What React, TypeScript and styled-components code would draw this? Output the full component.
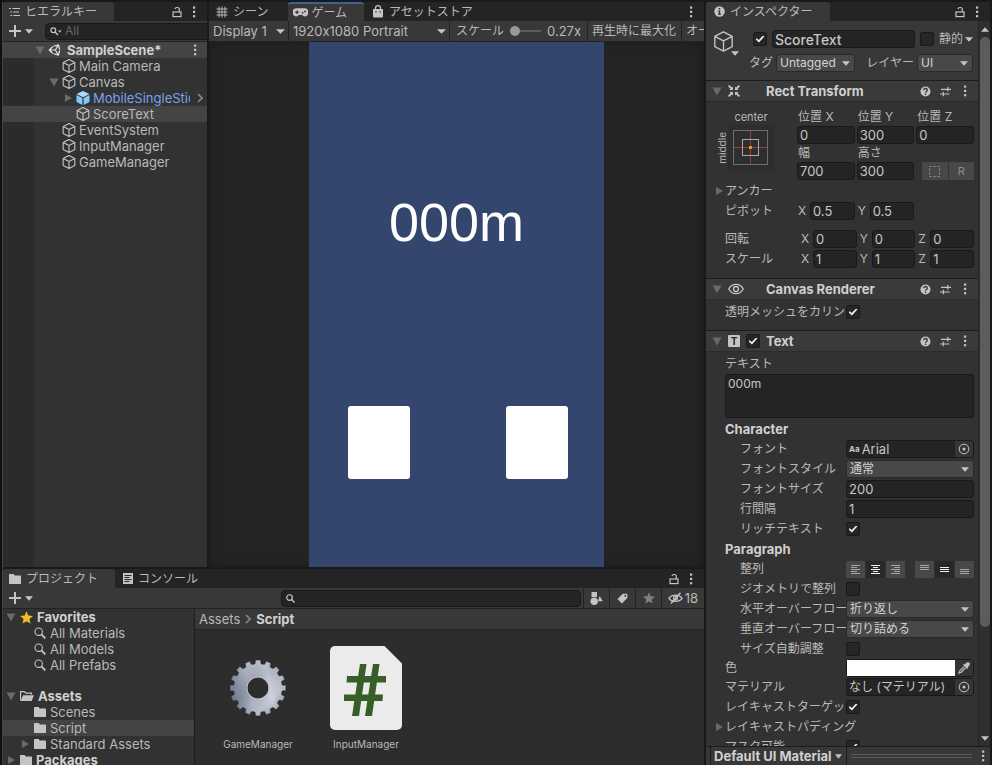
import React, { useState } from "react";
import styled, { createGlobalStyle, css } from "styled-components";
import { FaUnity } from "react-icons/fa";

const c = {
  edge: "#191919",
  tabbar: "#242424",
  bar: "#383838",
  panel: "#323232",
  field: "#242424",
  fieldLine: "#191919",
  button: "#484848",
  text: "#b9b9b9",
  bright: "#d0d0d0",
  dim: "#6a6a6a",
  icon: "#c4c4c4",
  select: "#444444",
};

const GlobalStyle = createGlobalStyle`
  *, *::before, *::after { box-sizing: border-box; }
  html, body, #root { height: 100%; margin: 0; }
  body {
    background: ${c.edge};
    color: ${c.text};
    font: 12px/16px Inter, "Noto Sans CJK JP", sans-serif;
    font-feature-settings: "calt" 0;
    overflow: hidden;
  }
  button, input, select, textarea {
    font: inherit;
    font-feature-settings: inherit;
    color: inherit;
    margin: 0;
  }
  button { background: none; border: 0; padding: 0; }
  ul { list-style: none; margin: 0; padding: 0; }
  svg { display: block; flex: none; }
`;

/* ---------- icons ---------- */

const Kebab = () => (
  <svg width="4" height="12" viewBox="0 0 4 12" fill={c.icon}>
    <rect x="1" y="0.5" width="2.2" height="2.2" />
    <rect x="1" y="4.8" width="2.2" height="2.2" />
    <rect x="1" y="9.1" width="2.2" height="2.2" />
  </svg>
);
const Lock = () => (
  <svg width="10" height="12" viewBox="0 0 10 12" fill="none" stroke={c.icon} strokeWidth="1.2">
    <rect x="1" y="6" width="8" height="4.6" />
    <path d="M7.3 6V3.4a1.9 1.9 0 0 0-1.9-1.9h-.6A1.9 1.9 0 0 0 3 3" />
  </svg>
);
const Down = ({ color = c.icon, size = 8 }: { color?: string; size?: number }) => (
  <svg width={size} height="5" viewBox="0 0 8 5" preserveAspectRatio="none" fill={color}>
    <path d="M0 .3h8L4 4.8z" />
  </svg>
);
const FoldOpen = () => (
  <svg width="10" height="9" viewBox="0 0 10 9" fill={c.dim}>
    <path d="M.5.5h9L5 8.5z" />
  </svg>
);
const FoldClosed = () => (
  <svg width="9" height="10" viewBox="0 0 9 10" fill={c.dim}>
    <path d="M1 1v8l7-4z" />
  </svg>
);
const Plus = () => (
  <svg width="12" height="12" viewBox="0 0 12 12" stroke={c.icon} strokeWidth="2">
    <path d="M6 0v12M0 6h12" />
  </svg>
);
const Cube = ({ size = 14 }: { size?: number }) => (
  <svg width={size} height={size} viewBox="0 0 14 14" fill="none" stroke={c.icon} strokeWidth={size > 16 ? 0.9 : 1.1} strokeLinejoin="round">
    <path d="M7 .6 12.8 3.6v6.8L7 13.4 1.2 10.4V3.6zM1.2 3.6 7 6.6l5.8-3M7 6.6v6.8" />
  </svg>
);
const Prefab = () => (
  <svg width="14" height="14" viewBox="0 0 14 14">
    <path d="M7 0 13.5 3 7 6.2.5 3z" fill="#a5dcff" />
    <path d="M.5 4 6.4 7v7L.5 11z" fill="#83c8f7" />
    <path d="M13.5 4 7.6 7v7l5.9-3z" fill="#83c8f7" />
  </svg>
);
const ListIcon = () => (
  <svg width="11" height="10" viewBox="0 0 11 10" fill={c.icon}>
    <path d="M0 1h2v1.1H0zM3.4 1H11v1.1H3.4zM1.4 4.4h1.8v1.1H1.4zM4.4 4.4H10v1.1H4.4zM1.4 7.9h1.8V9H1.4zM4.4 7.9H11V9H4.4z" />
  </svg>
);
const Grid3 = () => (
  <svg width="12" height="12" viewBox="0 0 12 12" stroke={c.icon} strokeWidth="1.3">
    <path d="M3 .5v11M6 .5v11M9 .5v11M.5 3h11M.5 6h11M.5 9h11" strokeWidth=".9" />
  </svg>
);
const Pad = () => (
  <svg width="15" height="9" viewBox="0 0 15 9">
    <path d="M4 .3h7a4.1 4.1 0 0 1 1.2 8.2c-1.5.4-2.3-1.5-3.4-1.5H6.2C5.1 7 4.3 8.9 2.8 8.5A4.1 4.1 0 0 1 4 .3z" fill={c.icon} />
    <path d="M2.2 4.2h3.6M4 2.4V6" stroke="#333" strokeWidth="1.2" />
    <circle cx="9.6" cy="4.8" r=".9" fill="#333" />
    <circle cx="12" cy="3.4" r=".9" fill="#333" />
  </svg>
);
const Bag = () => (
  <svg width="12" height="13" viewBox="0 0 12 13">
    <path d="M1 4h10v7.5a1 1 0 0 1-1 1H2a1 1 0 0 1-1-1z" fill={c.icon} />
    <path d="M3.5 4.5V3a2.5 2.3 0 0 1 5 0v1.5" fill="none" stroke={c.icon} strokeWidth="1.2" />
    <path d="M4 6v1.5M8 6v1.5" stroke="#333" strokeWidth="1" />
  </svg>
);
const Info = () => (
  <svg width="11" height="11" viewBox="0 0 11 11">
    <circle cx="5.5" cy="5.5" r="5.2" fill={c.icon} />
    <path d="M4.2 4.4h2v3.4h.9v1H4v-1h.8V5.4h-.6zM4.7 2h1.5v1.5H4.7z" fill="#2a2a2a" />
  </svg>
);
const Help = () => (
  <svg width="11" height="11" viewBox="0 0 11 11">
    <circle cx="5.5" cy="5.5" r="5" fill={c.icon} />
    <path d="M3.7 4.2c0-2.3 3.6-2.2 3.6 0 0 1.3-1.8 1.2-1.8 2.6" fill="none" stroke="#333" strokeWidth="1.3" />
    <rect x="4.8" y="7.6" width="1.4" height="1.3" fill="#333" />
  </svg>
);
const Sliders = () => (
  <svg width="11" height="11" viewBox="0 0 11 11" stroke={c.icon} strokeWidth="1.2">
    <path d="M1 3.3h10M7.8 1v4.6M0 8h9.5M3.3 5.7v4.6" />
  </svg>
);
const SearchIcon = ({ size = 9 }: { size?: number }) => (
  <svg width={size} height={size} viewBox="0 0 12 12" fill="none" stroke={c.icon} strokeWidth={size > 10 ? 1.1 : 1.6}>
    <circle cx="4.7" cy="4.7" r="3.7" />
    <path d="M7.4 7.4 11.4 11.4" strokeWidth="1.9" />
  </svg>
);
const SearchFilterIcon = () => (
  <svg width="12" height="9" viewBox="0 0 12 9" fill="none" stroke={c.icon}>
    <circle cx="3.3" cy="3.3" r="2.4" strokeWidth="1.2" />
    <path d="M5 5l3 3" strokeWidth="1.4" />
    <path d="M8 3.5h3.6L9.8 5.7z" fill={c.icon} stroke="none" />
  </svg>
);
const Chevron = () => (
  <svg width="6" height="10" viewBox="0 0 6 10" fill="none" stroke="#8a8a8a" strokeWidth="1.6">
    <path d="M1 1l4 4-4 4" />
  </svg>
);
const Folder = () => (
  <svg width="12" height="10" viewBox="0 0 12 10" fill={c.icon}>
    <path d="M.6 0h4l1.2 1.5h5.6q.6 0 .6.6v7.3q0 .6-.6.6H.6Q0 10 0 9.4V.6Q0 0 .6 0z" />
  </svg>
);
const FolderOpen = () => (
  <svg width="14" height="10" viewBox="0 0 14 10">
    <path d="M.6 9.4V.6h3.8l1.2 1.5h5.8v1.5" fill="none" stroke={c.icon} strokeWidth="1.2" />
    <path d="M3.2 4.2H14L11.6 10H.6z" fill={c.icon} />
  </svg>
);
const Star = ({ color, size = 12 }: { color: string; size?: number }) => (
  <svg width={size} height={size} viewBox="0 0 12 12" fill={color}>
    <path d="M6 .3l1.7 3.9 4.2.4-3.2 2.8 1 4.2L6 9.4l-3.7 2.2 1-4.2L.1 4.6l4.2-.4z" />
  </svg>
);
const ConsoleIcon = () => (
  <svg width="10" height="11" viewBox="0 0 10 11">
    <rect width="10" height="11" fill={c.icon} />
    <path d="M1.5 2.5h7M1.5 4.5h5M1.5 6.5h7M1.5 8.5h5" stroke="#2a2a2a" />
  </svg>
);
const Shapes = () => (
  <svg width="13" height="13" viewBox="0 0 13 13" fill={c.icon}>
    <path d="M1.5 0H7v5H1.5z" />
    <circle cx="4.2" cy="9.2" r="3.7" />
    <path d="M9.6 4l3.2 5.2H8z" />
  </svg>
);
const Tag = () => (
  <svg width="11" height="11" viewBox="0 0 11 11" fill={c.icon}>
    <path fillRule="evenodd" d="M5.8.7h3.7l1 .9-.2 3.5-5.4 5.3L.5 6zM8.2 2a.9.9 0 1 0 .01 0z" />
  </svg>
);
const EyeOff = () => (
  <svg width="15" height="12" viewBox="0 0 15 12" fill="none" stroke={c.icon} strokeWidth="1.3">
    <path d="M1 6.4C3.5 2 11.5 2 14 6.4 11.5 10.3 3.5 10.3 1 6.4z" />
    <circle cx="7.5" cy="6" r="1.9" />
    <path d="M3 11.5 12.5.8" strokeWidth="1.5" />
  </svg>
);
const Eye = () => (
  <svg width="16" height="12" viewBox="0 0 16 12" fill="none" stroke={c.icon} strokeWidth="1.3">
    <path d="M.8 6C3.8-.2 12.2-.2 15.2 6 12.2 12.2 3.8 12.2.8 6z" />
    <circle cx="8" cy="6" r="2.5" />
  </svg>
);
const RectIcon = () => (
  <svg width="12" height="12" viewBox="0 0 12 12" fill={c.icon} stroke={c.icon}>
    <path d="M5 5V1.4L1.4 5zM7 5V1.4L10.6 5zM5 7v3.6L1.4 7zM7 7v3.6L10.6 7z" stroke="none" />
    <path d="M.6.6 4 4M11.4.6 8 4M.6 11.4 4 8M11.4 11.4 8 8" strokeWidth="1.8" />
  </svg>
);
const TextBadge = styled.span`
  width: 12px;
  height: 12px;
  flex: none;
  border-radius: 1px;
  background: ${c.icon};
  color: #2a2a2a;
  font-weight: 700;
  font-size: 10px;
  line-height: 12px;
  text-align: center;
`;
const Target = () => (
  <svg width="12" height="12" viewBox="0 0 12 12" fill="none" stroke={c.icon}>
    <circle cx="6" cy="6" r="4.8" />
    <circle cx="6" cy="6" r="1.5" fill={c.icon} stroke="none" />
  </svg>
);
const Dropper = () => (
  <svg width="12" height="12" viewBox="0 0 12 12">
    <path d="M7.6 1.6Q9.8-.6 11.3.8T10.5 4.4l-1 1 .6.6-1 1L5 2.9l1-1 .6.6z" fill={c.icon} />
    <path d="M6 4.6 1.8 8.8 1 11l2.2-.8L7.4 6" fill="none" stroke={c.icon} strokeWidth="1.1" />
  </svg>
);
const AnchorDiagram = () => (
  <svg width="46" height="46" viewBox="0 0 46 46" fill="none">
    <rect width="46" height="46" fill="#2e2e2e" />
    <path d="M6 22.5h33M22.5 6v33" stroke="#9c3c3c" />
    <rect x="5.5" y="5.5" width="34" height="34" stroke="#6d6d6d" />
    <rect x="14.5" y="14.5" width="16" height="16" stroke="#a8a8a8" />
    <rect x="21" y="21" width="3" height="3" fill="#d0a020" />
  </svg>
);
const Dashed = () => (
  <svg width="11" height="11" viewBox="0 0 11 11" fill="none" stroke="#909090" strokeDasharray="2 2">
    <rect x=".5" y=".5" width="10" height="10" />
  </svg>
);

const alignPaths: Record<string, string> = {
  left: "M0 .5h9M0 2.5h6M0 4.5h9M0 6.5h6M0 8.5h9",
  center: "M0 .5h9M2 2.5h5M0 4.5h9M2 6.5h5M0 8.5h9",
  right: "M0 .5h9M3 2.5h6M0 4.5h9M3 6.5h6M0 8.5h9",
  top: "M0 .5h9M0 2.5h9M0 4.5h9",
  middle: "M0 2.5h9M0 4.5h9M0 6.5h9",
  bottom: "M0 4.5h9M0 6.5h9M0 8.5h9",
};
const AlignIcon = ({ kind, on }: { kind: string; on: boolean }) => (
  <svg width="9" height="9" viewBox="0 0 9 9" stroke={on ? "#f0f0f0" : "#a8a8a8"}>
    <path d={alignPaths[kind]} />
  </svg>
);

const gearPath = (() => {
  const pts: string[] = [];
  const teeth = 16;
  for (let i = 0; i < teeth; i++) {
    const a = (i * 2 * Math.PI) / teeth - Math.PI / 2;
    for (const [off, r] of [[-0.125, 24.3], [-0.085, 28], [0.085, 28], [0.125, 24.3]]) {
      pts.push(`${(29 + r * Math.cos(a + off)).toFixed(2)} ${(29 + r * Math.sin(a + off)).toFixed(2)}`);
    }
  }
  return `M${pts.join("L")}ZM29 18.5a10.5 10.5 0 1 0 .01 0Z`;
})();
const Gear = () => (
  <svg width="58" height="58" viewBox="0 0 58 58">
    <defs>
      <linearGradient id="steel" x1=".1" y1=".15" x2=".85" y2=".9">
        <stop offset="0" stopColor="#c6cad4" />
        <stop offset=".2" stopColor="#b4b9c6" />
        <stop offset=".4" stopColor="#a2a8b8" />
        <stop offset=".6" stopColor="#bcc0cc" />
        <stop offset=".8" stopColor="#c4c8d2" />
        <stop offset="1" stopColor="#8b92a5" />
      </linearGradient>
      <linearGradient id="shade" x1="0" y1=".6" x2="1" y2=".4">
        <stop offset="0" stopColor="#5f6880" stopOpacity=".8" />
        <stop offset=".35" stopColor="#5f6880" stopOpacity=".15" />
        <stop offset=".7" stopColor="#e4e6ec" stopOpacity=".35" />
        <stop offset="1" stopColor="#7c8499" stopOpacity=".3" />
      </linearGradient>
    </defs>
    <path d={gearPath} fill="url(#steel)" fillRule="evenodd" stroke="#1f2126" strokeWidth=".6" />
    <path d={gearPath} fill="url(#shade)" fillRule="evenodd" />
    <circle cx="29" cy="29" r="11" fill="none" stroke="#c9ccd6" strokeWidth=".8" />
  </svg>
);
const ScriptFile = () => (
  <svg width="72" height="84" viewBox="0 0 72 84">
    <path d="M5 0h49.5L72 17.5V79a5 5 0 0 1-5 5H5a5 5 0 0 1-5-5V5a5 5 0 0 1 5-5z" fill="#ebebeb" />
    <path d="M30 18h6.5L29 70h-7zM43 18h6.500L42 70h-7zM17 30h39v6.500H16.500zM14 48.500h39l-.5 6.500H14z" fill="#365e26" />
  </svg>
);

/* ---------- shared parts ---------- */

const Frame = styled.div`
  display: grid;
  grid-template-columns: minmax(0, 702fr) minmax(0, 284fr);
  gap: 2px;
  height: 100vh;
  padding: 2px 2px 0 0;
  border-left: 2px solid #101010;
  background: ${c.edge};
`;
const LeftSide = styled.div`
  display: grid;
  grid-template-rows: minmax(0, 565fr) minmax(0, 196fr);
  gap: 2px;
  min-height: 0;
  border-left: 1px solid #444;
`;
const TopSide = styled.div`
  display: grid;
  grid-template-columns: minmax(0, 204fr) minmax(0, 495fr);
  gap: 2px;
  min-height: 0;
`;
const Window = styled.section`
  display: flex;
  flex-direction: column;
  min-width: 0;
  min-height: 0;
  background: ${c.panel};
  overflow: hidden;
`;
const TabBar = styled.div`
  display: flex;
  flex: none;
  height: 19px;
  background: ${c.tabbar};
`;
const Tab = styled.button<{ $active?: boolean; $focused?: boolean }>`
  display: flex;
  align-items: center;
  gap: 5px;
  padding: 0 17px 0 6px;
  white-space: nowrap;
  background: ${(p) => (p.$active ? c.bar : "transparent")};
  border-top: ${(p) => (p.$focused ? "2px solid #3a6299" : "0")};
  border-radius: 3px 3px 0 0;
`;
const BarEnd = styled.div`
  display: flex;
  align-items: center;
  gap: 10px;
  margin-left: auto;
  padding-right: 11px;
`;
const IconButton = styled.button`
  display: flex;
  align-items: center;
  justify-content: center;
  gap: 4px;
`;
const Toolbar = styled.div`
  display: flex;
  flex: none;
  align-items: center;
  height: 21px;
  background: ${c.bar};
  border-bottom: 1px solid #222;
`;
const SearchBox = styled.label`
  display: flex;
  align-items: center;
  flex: 1;
  gap: 3px;
  height: 17px;
  padding: 0 4px;
  min-width: 0;
  background: ${c.field};
  border: 1px solid ${c.fieldLine};
  border-radius: 4px;
  input {
    flex: 1;
    min-width: 0;
    background: none;
    border: 0;
    padding: 0;
    outline: 0;
    height: 15px;
  }
  input::placeholder { color: #666; opacity: 1; }
`;
const AddButton = styled(IconButton)`
  padding: 0 7px 0 6px;
`;

/* ---------- hierarchy ---------- */

const Tree = styled.ul`
  flex: 1;
  min-height: 0;
  font-size: 13px;
  background: linear-gradient(to right, #2b2b2b 31px, ${c.panel} 31px);
`;
const treeRow = css<{ $selected?: boolean; $strong?: boolean }>`
  display: flex;
  align-items: center;
  gap: 3px;
  height: 16px;
  line-height: 16px;
  white-space: nowrap;
  background: ${(p) => (p.$selected ? c.select : "transparent")};
  font-weight: ${(p) => (p.$strong ? 700 : 400)};
  color: ${(p) => (p.$strong ? c.bright : c.text)};
`;
const TreeRow = styled.li<{ $depth: number; $selected?: boolean; $strong?: boolean }>`
  ${treeRow}
  padding: 0 6px 0 ${(p) => 32 + p.$depth * 14}px;
`;
const Fold = styled.span`
  display: flex;
  justify-content: center;
  width: 10px;
  flex: none;
`;
const TreeName = styled.span<{ $link?: boolean }>`
  flex: 1;
  min-width: 0;
  overflow: hidden;
  color: ${(p) => (p.$link ? "#7ba0ea" : "inherit")};
`;
const SceneName = styled(TreeName)`
  padding-left: 2px;
`;
const HierarchySearch = styled.div`
  display: flex;
  flex: 1;
  padding: 0 3px 0 5px;
`;
const KebabPad = styled.span`
  padding-right: 4px;
`;
const ChevronPad = styled.span`
  padding-left: 4px;
  margin-right: -2px;
`;

const hierarchy = [
  { name: "Main Camera", depth: 1 },
  { name: "Canvas", depth: 1, fold: "open" },
  { name: "MobileSingleStickControl", depth: 2, fold: "closed", prefab: true },
  { name: "ScoreText", depth: 2, selected: true },
  { name: "EventSystem", depth: 1 },
  { name: "InputManager", depth: 1 },
  { name: "GameManager", depth: 1 },
];

const Hierarchy = () => (
  <Window>
    <TabBar>
      <Tab $active><ListIcon />ヒエラルキー</Tab>
      <BarEnd>
        <IconButton aria-label="ロック"><Lock /></IconButton>
        <IconButton aria-label="メニュー"><Kebab /></IconButton>
      </BarEnd>
    </TabBar>
    <Toolbar>
      <AddButton aria-label="作成"><Plus /><Down /></AddButton>
      <HierarchySearch>
        <SearchBox>
          <SearchFilterIcon />
          <input placeholder="All" aria-label="検索" />
        </SearchBox>
      </HierarchySearch>
    </Toolbar>
    <Tree>
      <TreeRow $depth={0} $selected $strong>
        <Fold><FoldOpen /></Fold>
        <FaUnity size={14} color="#e4e4e4" />
        <SceneName>SampleScene*</SceneName>
        <IconButton aria-label="メニュー"><KebabPad><Kebab /></KebabPad></IconButton>
      </TreeRow>
      {hierarchy.map((n) => (
        <TreeRow key={n.name} $depth={n.depth} $selected={n.selected}>
          <Fold>{n.fold === "open" ? <FoldOpen /> : n.fold === "closed" ? <FoldClosed /> : null}</Fold>
          {n.prefab ? <Prefab /> : <Cube />}
          <TreeName $link={n.prefab}>{n.name}</TreeName>
          {n.prefab && <ChevronPad><Chevron /></ChevronPad>}
        </TreeRow>
      ))}
    </Tree>
  </Window>
);

/* ---------- game view ---------- */

const GameBar = styled(Toolbar)`
  overflow: hidden;
  white-space: nowrap;
`;
const barItem = css`
  display: flex;
  align-items: center;
  height: 20px;
  flex: none;
  border-right: 1px solid #222;
`;
const PlainSelect = styled.label<{ $width: number }>`
  ${barItem}
  width: ${(p) => p.$width}px;
  padding: 0 3px 0 4px;
  font-size: 13px;
  select {
    flex: 1;
    min-width: 0;
    appearance: none;
    background: none;
    border: 0;
    padding: 0;
  }
`;
const ScaleItem = styled.label`
  ${barItem}
  width: 138px;
  padding: 0 7px 0 6px;
  gap: 6px;
  justify-content: space-between;
  output { font-size: 13px; }
  input {
    appearance: none;
    width: 31px;
    height: 10px;
    background: linear-gradient(#5c5c5c, #5c5c5c) center / 100% 2px no-repeat;
  }
  input::-webkit-slider-thumb {
    appearance: none;
    width: 10px;
    height: 10px;
    border-radius: 50%;
    background: #999;
  }
`;
const BarToggle = styled.button<{ $last?: boolean }>`
  ${barItem}
  padding: 0 5px 0 4px;
  flex: ${(p) => (p.$last ? "1 0 auto" : "none")};
`;
const GameArea = styled.div`
  flex: 1;
  min-height: 0;
  display: flex;
  justify-content: center;
  background: ${c.tabbar};
  box-shadow: inset 0 0 12px #1a1a1a;
`;
const Stage = styled.div`
  height: 100%;
  aspect-ratio: 295 / 525;
  display: grid;
  grid-template-rows: 360fr 4fr 73fr 88fr;
  background: #34466d;
`;
const Score = styled.p`
  margin: 0;
  align-self: center;
  justify-self: center;
  font: 54px/60px "Liberation Sans", sans-serif;
  color: #fff;
`;
const StickRow = styled.div`
  grid-row: 3;
  display: grid;
  grid-template-columns: 39fr 62fr 96fr 62fr 36fr;
`;
const StickButton = styled.button<{ $column: number }>`
  grid-column: ${(p) => p.$column};
  background: #fff;
  border-radius: 3px;
`;
const GameTab = styled(Tab)`
  gap: 3px;
  padding: 0 17px 0 5px;
`;
const SceneTab = styled(Tab)`
  padding: 0 20px 0 7px;
`;
const StoreTab = styled(Tab)`
  padding-left: 8px;
`;

const Game = () => {
  const [scale, setScale] = useState("0.27");
  return (
    <Window>
      <TabBar>
        <SceneTab><Grid3 />シーン</SceneTab>
        <GameTab $active $focused><Pad />ゲーム</GameTab>
        <StoreTab><Bag />アセットストア</StoreTab>
        <BarEnd><IconButton aria-label="メニュー"><Kebab /></IconButton></BarEnd>
      </TabBar>
      <GameBar>
        <PlainSelect $width={80}>
          <select aria-label="ディスプレイ"><option>Display 1</option></select><Down size={9} />
        </PlainSelect>
        <PlainSelect $width={161}>
          <select aria-label="解像度"><option>1920x1080 Portrait</option></select><Down size={9} />
        </PlainSelect>
        <ScaleItem>
          スケール
          <input type="range" min="0.27" max="5" step="0.01" value={scale} onChange={(e) => setScale(e.target.value)} />
          <output>{scale}x</output>
        </ScaleItem>
        <BarToggle>再生時に最大化</BarToggle>
        <BarToggle $last>オーディオをミュート</BarToggle>
      </GameBar>
      <GameArea>
        <Stage>
          <Score>000m</Score>
          <StickRow>
            <StickButton $column={2} aria-label="スティック" />
            <StickButton $column={4} aria-label="ジャンプ" />
          </StickRow>
        </Stage>
      </GameArea>
    </Window>
  );
};

/* ---------- project ---------- */

const ProjectBody = styled.div`
  flex: 1;
  min-height: 0;
  display: grid;
  grid-template-columns: minmax(0, 192fr) minmax(0, 509fr);
`;
const ProjectTree = styled.ul`
  min-height: 0;
  overflow: hidden;
  font-size: 13px;
  border-right: 1px solid #1f1f1f;
`;
const ProjectRow = styled.li<{ $depth: number; $selected?: boolean; $strong?: boolean; $spaced?: boolean }>`
  ${treeRow}
  gap: 4px;
  margin-top: ${(p) => (p.$spaced ? 15 : 0)}px;
  padding-left: ${(p) => 3 + p.$depth * 14}px;
`;
const FolderContents = styled.div`
  display: flex;
  flex-direction: column;
  background: #2d2d2d;
`;
const Breadcrumb = styled.nav`
  display: flex;
  align-items: center;
  flex: none;
  gap: 5px;
  height: 21px;
  padding: 0 4px;
  font-size: 13px;
  background: ${c.bar};
  border-bottom: 1px solid #242424;
  strong { font-weight: 700; color: ${c.bright}; }
`;
const AssetGrid = styled.div`
  display: grid;
  grid-template-columns: repeat(auto-fill, 108px);
  padding: 16px 9px 0;
`;
const Asset = styled.button`
  display: flex;
  flex-direction: column;
  align-items: center;
  gap: 6px;
  font-size: 10px;
`;
const Thumb = styled.span`
  display: flex;
  align-items: center;
  height: 84px;
`;
const ToolCell = styled.button<{ $wide?: boolean }>`
  display: flex;
  align-items: center;
  justify-content: center;
  gap: 2px;
  width: ${(p) => (p.$wide ? 43 : 26)}px;
  height: 20px;
  flex: none;
  font-size: 13px;
  border-left: 1px solid #222;
`;
const ProjectToolbar = styled(Toolbar)`
  justify-content: space-between;
`;
const ProjectTools = styled.div`
  display: flex;
  align-items: center;
  flex: 0 1 423px;
  gap: 2px;
`;
const ToolCells = styled.div`
  display: flex;
`;

const folders = [
  { name: "Favorites", depth: 0, fold: "open", icon: <Star color="#f2bd25" size={13} />, strong: true },
  { name: "All Materials", depth: 1, icon: <SearchIcon size={12} /> },
  { name: "All Models", depth: 1, icon: <SearchIcon size={12} /> },
  { name: "All Prefabs", depth: 1, icon: <SearchIcon size={12} /> },
  { name: "Assets", depth: 0, fold: "open", icon: <FolderOpen />, strong: true, spaced: true },
  { name: "Scenes", depth: 1, icon: <Folder /> },
  { name: "Script", depth: 1, icon: <Folder />, selected: true },
  { name: "Standard Assets", depth: 1, fold: "closed", icon: <Folder /> },
  { name: "Packages", depth: 0, fold: "closed", icon: <Folder />, strong: true },
];

const Project = () => (
  <Window>
    <TabBar>
      <Tab $active><Folder />プロジェクト</Tab>
      <StoreTab><ConsoleIcon />コンソール</StoreTab>
      <BarEnd>
        <IconButton aria-label="ロック"><Lock /></IconButton>
        <IconButton aria-label="メニュー"><Kebab /></IconButton>
      </BarEnd>
    </TabBar>
    <ProjectToolbar>
      <AddButton aria-label="作成"><Plus /><Down /></AddButton>
      <ProjectTools>
        <SearchBox><SearchIcon /><input aria-label="検索" /></SearchBox>
        <ToolCells>
          <ToolCell aria-label="タイプで検索"><Shapes /></ToolCell>
          <ToolCell aria-label="ラベルで検索"><Tag /></ToolCell>
          <ToolCell aria-label="お気に入り"><Star color="#7e7e7e" /></ToolCell>
          <ToolCell $wide><EyeOff />18</ToolCell>
        </ToolCells>
      </ProjectTools>
    </ProjectToolbar>
    <ProjectBody>
      <ProjectTree>
        {folders.map((f) => (
          <ProjectRow key={f.name} $depth={f.depth} $selected={f.selected} $strong={f.strong} $spaced={f.spaced}>
            <Fold>{f.fold === "open" ? <FoldOpen /> : f.fold === "closed" ? <FoldClosed /> : null}</Fold>
            {f.icon}
            <TreeName>{f.name}</TreeName>
          </ProjectRow>
        ))}
      </ProjectTree>
      <FolderContents>
        <Breadcrumb><button>Assets</button><Chevron /><strong>Script</strong></Breadcrumb>
        <AssetGrid>
          <Asset><Thumb><Gear /></Thumb>GameManager</Asset>
          <Asset><Thumb><ScriptFile /></Thumb>InputManager</Asset>
        </AssetGrid>
      </FolderContents>
    </ProjectBody>
  </Window>
);

/* ---------- inspector ---------- */

const InspectorBody = styled.div`
  flex: 1;
  min-height: 0;
  display: grid;
  grid-template-columns: minmax(0, 1fr) 12px;
`;
const InspectorScroll = styled.div`
  min-height: 0;
  overflow: hidden;
`;
const ScrollBar = styled.div`
  display: flex;
  flex-direction: column;
  align-items: center;
  gap: 5px;
  padding: 6px 0 5px 1px;
  background: #2f2f2f;
  border-left: 1px solid #262626;
`;
const ScrollTrack = styled.div`
  flex: 1;
  align-self: stretch;
  display: flex;
`;
const ScrollThumb = styled.div`
  width: 100%;
  height: 85%;
  border-radius: 5px;
  background: #5c5c5c;
`;
const Up = styled.span`
  display: flex;
  transform: rotate(180deg);
`;

const TextField = styled.input`
  width: 100%;
  min-width: 0;
  height: 18px;
  padding: 0 2px;
  font-size: 13px;
  color: #c6c6c6;
  background: ${c.field};
  border: 1px solid ${c.fieldLine};
  border-radius: 3px;
`;
const Area = styled.textarea`
  display: block;
  width: 100%;
  height: 44px;
  margin-bottom: 1px;
  padding: 1px 2px;
  resize: none;
  background: ${c.field};
  border: 1px solid ${c.fieldLine};
  border-radius: 3px;
  color: #c6c6c6;
`;
const Check = styled.input.attrs({ type: "checkbox" })`
  appearance: none;
  display: grid;
  place-content: center;
  flex: none;
  width: 14px;
  height: 14px;
  background: #262626;
  border: 1px solid ${c.fieldLine};
  border-radius: 2px;
  &:checked::after {
    content: "";
    width: 9px;
    height: 7px;
    background: #f0f0f0;
    clip-path: polygon(0 55%, 14% 40%, 36% 66%, 84% 0, 100% 12%, 38% 100%);
  }
`;
const SelectShell = styled.span<{ $width?: number }>`
  display: grid;
  align-items: center;
  width: ${(p) => (p.$width ? `${p.$width}px` : "100%")};
  height: 18px;
  background: ${c.button};
  border: 1px solid #2a2a2a;
  border-radius: 3px;
  select {
    grid-area: 1 / 1;
    appearance: none;
    width: 100%;
    height: 16px;
    padding: 0 16px 0 3px;
    background: none;
    border: 0;
    color: #d2d2d2;
  }
  svg {
    grid-area: 1 / 1;
    justify-self: end;
    margin-right: 4px;
    pointer-events: none;
  }
`;
const Select = ({ id, value, width }: { id: string; value: string; width?: number }) => (
  <SelectShell $width={width}>
    <select id={id}><option>{value}</option></select>
    <Down />
  </SelectShell>
);

const ObjectHead = styled.header`
  display: grid;
  grid-template-columns: 36px minmax(0, 1fr);
  height: 59px;
  padding: 8px 5px 0 7px;
  background: ${c.bar};
`;
const ObjectIcon = styled.button`
  display: flex;
  align-items: flex-end;
  align-self: start;
  height: 27px;
`;
const ObjectCube = styled.span`
  align-self: flex-start;
  padding-top: 2px;
  margin-right: -3px;
`;
const HeadRow = styled.div`
  display: flex;
  align-items: center;
  height: 20px;
  gap: 5px;
  padding-left: 4px;
`;
const TagRow = styled(HeadRow)`
  justify-content: space-between;
  margin-top: 4px;
  padding-left: 0;
`;
const Pair = styled.div`
  display: flex;
  align-items: center;
  gap: 3px;
  white-space: nowrap;
`;
const NameField = styled(TextField)`
  flex: 1;
  font-size: 14px;
  font-weight: 500;
`;
const HeadLines = styled.div`
  display: flex;
  flex-direction: column;
`;
const StaticMenu = styled(IconButton)`
  gap: 2px;
`;

const SectionHead = styled.header`
  display: flex;
  align-items: center;
  height: 22px;
  gap: 6px;
  padding: 0 3px 0 6px;
  background: #3a3a3a;
  border-top: 1px solid #1c1c1c;
  border-bottom: 1px solid #2b2b2b;
`;
const SectionTitle = styled.h2`
  flex: 1;
  margin: 0;
  font-size: 13px;
  font-weight: 700;
  color: ${c.bright};
`;
const SectionIcons = styled.span`
  display: flex;
  align-items: center;
  gap: 6px;
  width: 32px;
`;
const SectionTools = styled.span`
  display: flex;
  align-items: center;
`;
const ToolButton = styled(IconButton)`
  width: 20px;
`;
const Head = ({ title, children }: { title: string; children: React.ReactNode }) => (
  <SectionHead>
    <FoldOpen />
    <SectionIcons>{children}</SectionIcons>
    <SectionTitle>{title}</SectionTitle>
    <SectionTools>
      <ToolButton aria-label="ヘルプ"><Help /></ToolButton>
      <ToolButton aria-label="プリセット"><Sliders /></ToolButton>
      <ToolButton aria-label="メニュー"><Kebab /></ToolButton>
    </SectionTools>
  </SectionHead>
);

const RectBody = styled.div`
  height: 176px;
  padding: 6px 4px 0 9px;
`;
const AnchorRow = styled.div`
  display: grid;
  grid-template-columns: 82px minmax(0, 1fr);
  margin-bottom: 1px;
`;
const AnchorBox = styled.div`
  display: grid;
  grid-template-columns: 13px 46px;
  grid-template-rows: 17px 46px;
  font-size: 11px;
  align-content: start;
  justify-items: center;
  align-items: center;
`;
const AnchorTop = styled.span`
  grid-column: 2;
`;
const AnchorSide = styled.span`
  writing-mode: vertical-rl;
  transform: rotate(180deg);
  font-size: 10px;
`;
const Cells = styled.div`
  display: grid;
  grid-template-columns: repeat(3, minmax(0, 1fr));
  column-gap: 2px;
`;
const Cell = styled.label`
  display: block;
  height: 36px;
  line-height: 18px;
  span { display: block; padding-left: 1px; }
`;
const ModeButtons = styled.div`
  display: grid;
  grid-template-columns: 1fr 1fr;
  gap: 1px;
  align-self: end;
  margin-left: 6px;
  height: 18px;
  button {
    display: grid;
    place-content: center;
    background: ${c.button};
    color: #8c8c8c;
    font-size: 11px;
  }
`;
const FoldRow = styled.button`
  display: flex;
  align-items: center;
  gap: 1px;
  height: 20px;
`;
const VectorRow = styled.div<{ $tight?: boolean; $spaced?: boolean }>`
  display: grid;
  grid-template-columns: ${(p) => (p.$tight ? 73 : 76)}px minmax(0, 1fr);
  align-items: center;
  height: 20px;
  margin: ${(p) => (p.$spaced ? 8 : 0)}px 0 0 10px;
`;
const VectorCells = styled.div`
  display: grid;
  grid-template-columns: repeat(3, minmax(0, 1fr));
  column-gap: 3px;
`;
const Axis = styled.label`
  display: grid;
  grid-template-columns: 12px minmax(0, 1fr);
  align-items: center;
`;

const vector = (name: string, values: (string | null)[], tight = false, spaced = false) => (
  <VectorRow $tight={tight} $spaced={spaced}>
    <span>{name}</span>
    <VectorCells>
      {values.map((v, i) => v !== null && (
        <Axis key={i}>{"XYZ"[i]}<TextField defaultValue={v} /></Axis>
      ))}
    </VectorCells>
  </VectorRow>
);

const PropertyBody = styled.div`
  padding: 2px 4px 0 19px;
`;
const RendererBody = styled(PropertyBody)`
  padding-bottom: 8px;
`;
const Property = styled.div<{ $indent?: boolean; $short?: boolean }>`
  display: grid;
  grid-template-columns: 121px minmax(0, 1fr);
  align-items: center;
  height: ${(p) => (p.$short ? 18 : 20)}px;
  label, > span:first-child {
    padding-left: ${(p) => (p.$indent ? 15 : 0)}px;
    overflow: hidden;
    white-space: nowrap;
  }
`;
const GroupTitle = styled.h3`
  margin: 0;
  height: 20px;
  font-size: 13px;
  line-height: 20px;
  font-weight: 700;
  color: ${c.bright};
`;
const FieldLabel = styled.label`
  display: block;
  line-height: 20px;
`;
const ObjectField = styled.div`
  display: flex;
  align-items: center;
  height: 18px;
  padding-left: 2px;
  background: ${c.field};
  border: 1px solid ${c.fieldLine};
  border-radius: 3px;
  color: #c6c6c6;
  input {
    flex: 1;
    min-width: 0;
    padding: 0;
    height: 16px;
    background: none;
    border: 0;
  }
`;
const FieldEnd = styled.button`
  display: grid;
  place-content: center;
  width: 18px;
  height: 16px;
  background: #353535;
`;
const FontMark = styled.b`
  font-size: 8px;
  line-height: 16px;
  padding-right: 2px;
`;
const FontInput = styled.input`
  font-size: 13px;
`;
const ColorField = styled.div`
  display: flex;
  align-items: center;
  height: 18px;
  border: 1px solid ${c.fieldLine};
  border-radius: 3px;
  input {
    appearance: none;
    flex: 1;
    min-width: 0;
    height: 16px;
    padding: 0;
    border: 0;
    background: #fff;
  }
  input::-webkit-color-swatch-wrapper { padding: 0; }
  input::-webkit-color-swatch { border: 0; }
`;
const AlignGroups = styled.div`
  display: flex;
  justify-content: space-between;
`;
const AlignGroup = styled.div`
  display: flex;
  gap: 1px;
`;
const AlignButton = styled.button<{ $on: boolean }>`
  display: grid;
  place-content: center;
  width: 19px;
  height: 17px;
  background: ${(p) => (p.$on ? "#282828" : c.button)};
`;
const PaddingRow = styled(FoldRow)`
  margin-left: -10px;
`;
const InspectorTab = styled(Tab)`
  gap: 5px;
  padding: 0 18px 0 8px;
`;

const MaterialBar = styled.footer`
  display: flex;
  align-items: center;
  flex: none;
  height: 19px;
  border-top: 1px solid #1c1c1c;
  padding: 0 5px 0 4px;
  background: ${c.bar};
`;
const MaterialName = styled.button`
  display: flex;
  align-items: center;
  gap: 3px;
  height: 18px;
  padding: 0 4px 0 3px;
  border: solid #1c1c1c;
  border-width: 0 1px;
  font-size: 13px;
  font-weight: 700;
  color: ${c.bright};
  white-space: nowrap;
`;
const Grip = styled.span`
  flex: 1;
  height: 4px;
  margin: 0 9px 0 4px;
  border: solid #5a5a5a;
  border-width: 1px 0;
`;

const Inspector = () => {
  const [h, setH] = useState("center");
  const [v, setV] = useState("middle");
  return (
    <Window>
      <TabBar>
        <InspectorTab $active><Info />インスペクター</InspectorTab>
        <BarEnd>
          <IconButton aria-label="ロック"><Lock /></IconButton>
          <IconButton aria-label="メニュー"><Kebab /></IconButton>
        </BarEnd>
      </TabBar>
      <InspectorBody>
        <InspectorScroll>
          <ObjectHead>
            <ObjectIcon aria-label="アイコン"><ObjectCube><Cube size={21} /></ObjectCube><Down /></ObjectIcon>
            <HeadLines>
              <HeadRow>
                <Check defaultChecked aria-label="有効" />
                <NameField defaultValue="ScoreText" aria-label="名前" />
                <Check aria-label="静的" />
                <StaticMenu>静的<Down /></StaticMenu>
              </HeadRow>
              <TagRow>
                <Pair><label htmlFor="tag">タグ</label><Select id="tag" value="Untagged" width={79} /></Pair>
                <Pair><label htmlFor="layer">レイヤー</label><Select id="layer" value="UI" width={56} /></Pair>
              </TagRow>
            </HeadLines>
          </ObjectHead>

          <Head title="Rect Transform"><RectIcon /></Head>
          <RectBody>
            <AnchorRow>
              <AnchorBox>
                <AnchorTop>center</AnchorTop>
                <AnchorSide>middle</AnchorSide>
                <AnchorDiagram />
              </AnchorBox>
              <Cells>
                <Cell><span>位置 X</span><TextField defaultValue="0" /></Cell>
                <Cell><span>位置 Y</span><TextField defaultValue="300" /></Cell>
                <Cell><span>位置 Z</span><TextField defaultValue="0" /></Cell>
                <Cell><span>幅</span><TextField defaultValue="700" /></Cell>
                <Cell><span>高さ</span><TextField defaultValue="300" /></Cell>
                <ModeButtons>
                  <button aria-label="ブループリント"><Dashed /></button>
                  <button>R</button>
                </ModeButtons>
              </Cells>
            </AnchorRow>
            <FoldRow><FoldClosed />アンカー</FoldRow>
            {vector("ピボット", ["0.5", "0.5", null], true)}
            {vector("回転", ["0", "0", "0"], false, true)}
            {vector("スケール", ["1", "1", "1"])}
          </RectBody>

          <Head title="Canvas Renderer"><Eye /></Head>
          <RendererBody>
            <Property>
              <label htmlFor="cull">透明メッシュをカリング</label>
              <Check id="cull" defaultChecked />
            </Property>
          </RendererBody>

          <Head title="Text">
            <TextBadge>T</TextBadge>
            <Check defaultChecked aria-label="Text" />
          </Head>
          <PropertyBody>
            <FieldLabel htmlFor="text">テキスト</FieldLabel>
            <Area id="text" defaultValue="000m" />
            <GroupTitle>Character</GroupTitle>
            <Property $indent>
              <label htmlFor="font">フォント</label>
              <ObjectField>
                <FontMark>Aa</FontMark>
                <FontInput id="font" defaultValue="Arial" />
                <FieldEnd aria-label="フォントを選択"><Target /></FieldEnd>
              </ObjectField>
            </Property>
            <Property $indent><label htmlFor="style">フォントスタイル</label><Select id="style" value="通常" /></Property>
            <Property $indent><label htmlFor="size">フォントサイズ</label><TextField id="size" defaultValue="200" /></Property>
            <Property $indent><label htmlFor="line">行間隔</label><TextField id="line" defaultValue="1" /></Property>
            <Property $indent><label htmlFor="rich">リッチテキスト</label><Check id="rich" defaultChecked /></Property>
            <GroupTitle>Paragraph</GroupTitle>
            <Property $indent>
              <span>整列</span>
              <AlignGroups>
                <AlignGroup>
                  {["left", "center", "right"].map((k) => (
                    <AlignButton key={k} aria-label={k} $on={h === k} onClick={() => setH(k)}><AlignIcon kind={k} on={h === k} /></AlignButton>
                  ))}
                </AlignGroup>
                <AlignGroup>
                  {["top", "middle", "bottom"].map((k) => (
                    <AlignButton key={k} aria-label={k} $on={v === k} onClick={() => setV(k)}><AlignIcon kind={k} on={v === k} /></AlignButton>
                  ))}
                </AlignGroup>
              </AlignGroups>
            </Property>
            <Property $indent><label htmlFor="geo">ジオメトリで整列</label><Check id="geo" /></Property>
            <Property $indent><label htmlFor="hover">水平オーバーフロー</label><Select id="hover" value="折り返し" /></Property>
            <Property $indent><label htmlFor="vover">垂直オーバーフロー</label><Select id="vover" value="切り詰める" /></Property>
            <Property $indent><label htmlFor="best">サイズ自動調整</label><Check id="best" /></Property>
            <Property $short>
              <label htmlFor="color">色</label>
              <ColorField>
                <input id="color" type="color" defaultValue="#ffffff" />
                <FieldEnd aria-label="スポイト"><Dropper /></FieldEnd>
              </ColorField>
            </Property>
            <Property>
              <label htmlFor="material">マテリアル</label>
              <ObjectField>
                <input id="material" defaultValue="なし (マテリアル)" />
                <FieldEnd aria-label="マテリアルを選択"><Target /></FieldEnd>
              </ObjectField>
            </Property>
            <Property><label htmlFor="ray">レイキャストターゲット</label><Check id="ray" defaultChecked /></Property>
            <PaddingRow><FoldClosed />レイキャストパディング</PaddingRow>
            <Property><label htmlFor="mask">マスク可能</label><Check id="mask" defaultChecked /></Property>
          </PropertyBody>
        </InspectorScroll>
        <ScrollBar>
          <Up><Down /></Up>
          <ScrollTrack><ScrollThumb /></ScrollTrack>
          <Down />
        </ScrollBar>
      </InspectorBody>
      <MaterialBar>
        <MaterialName>Default UI Material<Down size={7} /></MaterialName>
        <Grip />
        <IconButton aria-label="メニュー"><Kebab /></IconButton>
      </MaterialBar>
    </Window>
  );
};

export default function App() {
  return (
    <>
      <GlobalStyle />
      <Frame>
        <LeftSide>
          <TopSide>
            <Hierarchy />
            <Game />
          </TopSide>
          <Project />
        </LeftSide>
        <Inspector />
      </Frame>
    </>
  );
}
